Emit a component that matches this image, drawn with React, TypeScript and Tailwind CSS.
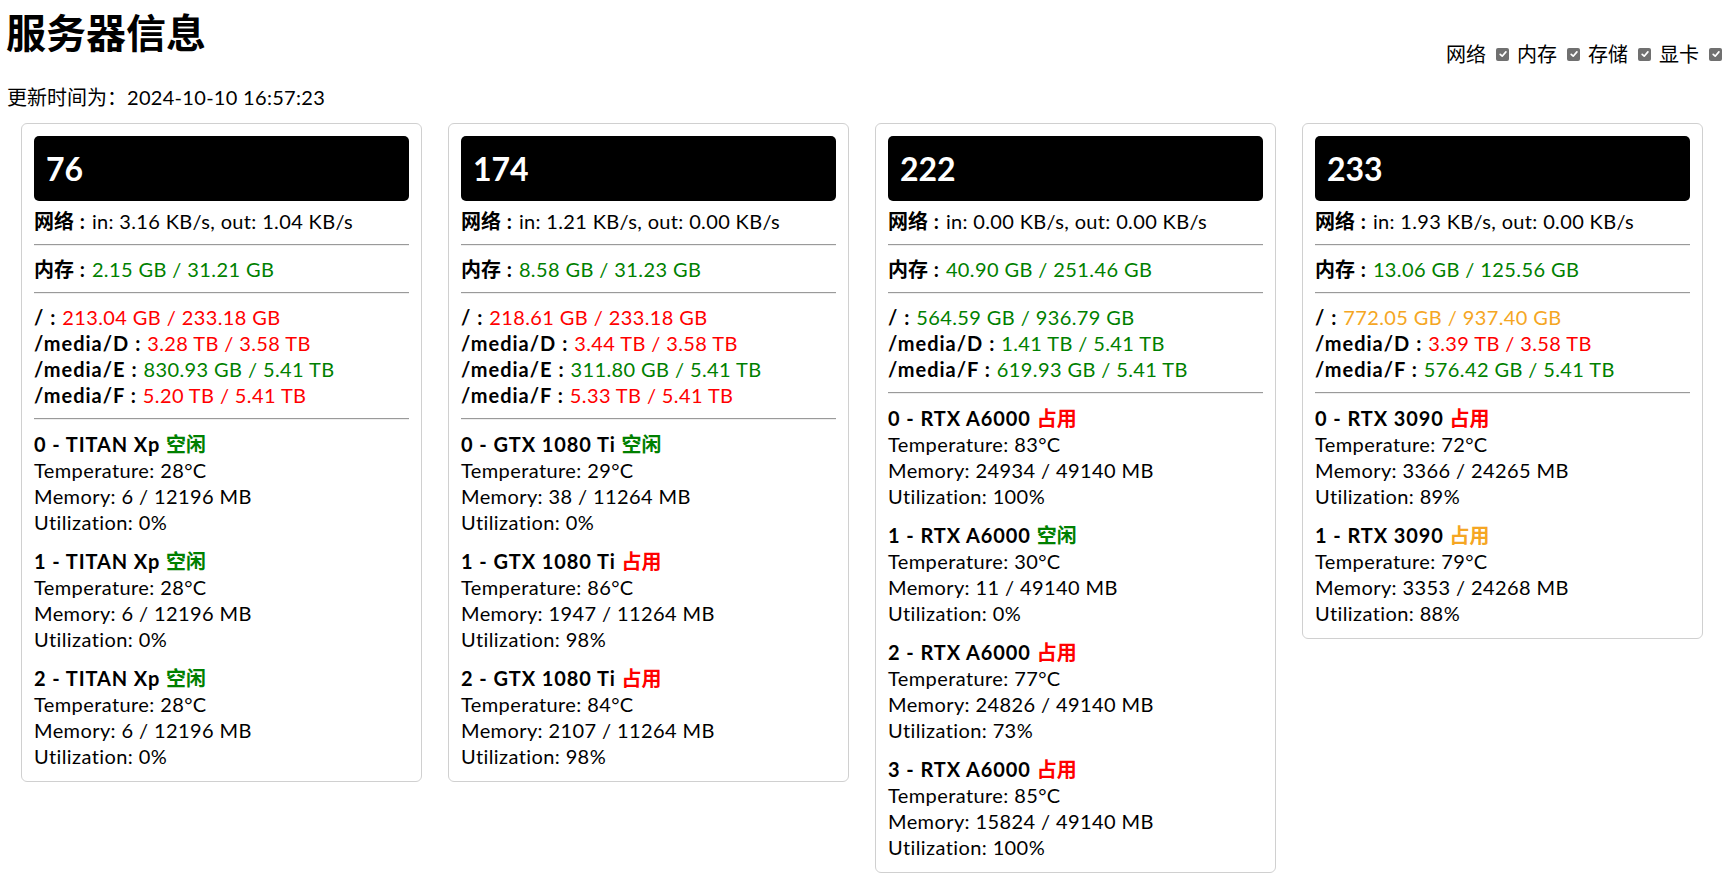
import React from "react";

type Seg = { label: string; value: string; color: string };
type Gpu = { idx: number; name: string; status: string; statusColor: string; temp: number; used: number; total: number; util: number };
type Server = { id: string; net: string; mem: Seg; disks: Seg[]; gpus: Gpu[] };

const GREEN = "text-[#008000]";
const RED = "text-[#ff0000]";
const ORANGE = "text-[#f5a623]";

const servers: Server[] = [
  {
    id: "76",
    net: "in: 3.16 KB/s, out: 1.04 KB/s",
    mem: { label: "内存", value: "2.15 GB / 31.21 GB", color: GREEN },
    disks: [
      { label: "/", value: "213.04 GB / 233.18 GB", color: RED },
      { label: "/media/D", value: "3.28 TB / 3.58 TB", color: RED },
      { label: "/media/E", value: "830.93 GB / 5.41 TB", color: GREEN },
      { label: "/media/F", value: "5.20 TB / 5.41 TB", color: RED },
    ],
    gpus: [
      { idx: 0, name: "TITAN Xp", status: "空闲", statusColor: GREEN, temp: 28, used: 6, total: 12196, util: 0 },
      { idx: 1, name: "TITAN Xp", status: "空闲", statusColor: GREEN, temp: 28, used: 6, total: 12196, util: 0 },
      { idx: 2, name: "TITAN Xp", status: "空闲", statusColor: GREEN, temp: 28, used: 6, total: 12196, util: 0 },
    ],
  },
  {
    id: "174",
    net: "in: 1.21 KB/s, out: 0.00 KB/s",
    mem: { label: "内存", value: "8.58 GB / 31.23 GB", color: GREEN },
    disks: [
      { label: "/", value: "218.61 GB / 233.18 GB", color: RED },
      { label: "/media/D", value: "3.44 TB / 3.58 TB", color: RED },
      { label: "/media/E", value: "311.80 GB / 5.41 TB", color: GREEN },
      { label: "/media/F", value: "5.33 TB / 5.41 TB", color: RED },
    ],
    gpus: [
      { idx: 0, name: "GTX 1080 Ti", status: "空闲", statusColor: GREEN, temp: 29, used: 38, total: 11264, util: 0 },
      { idx: 1, name: "GTX 1080 Ti", status: "占用", statusColor: RED, temp: 86, used: 1947, total: 11264, util: 98 },
      { idx: 2, name: "GTX 1080 Ti", status: "占用", statusColor: RED, temp: 84, used: 2107, total: 11264, util: 98 },
    ],
  },
  {
    id: "222",
    net: "in: 0.00 KB/s, out: 0.00 KB/s",
    mem: { label: "内存", value: "40.90 GB / 251.46 GB", color: GREEN },
    disks: [
      { label: "/", value: "564.59 GB / 936.79 GB", color: GREEN },
      { label: "/media/D", value: "1.41 TB / 5.41 TB", color: GREEN },
      { label: "/media/F", value: "619.93 GB / 5.41 TB", color: GREEN },
    ],
    gpus: [
      { idx: 0, name: "RTX A6000", status: "占用", statusColor: RED, temp: 83, used: 24934, total: 49140, util: 100 },
      { idx: 1, name: "RTX A6000", status: "空闲", statusColor: GREEN, temp: 30, used: 11, total: 49140, util: 0 },
      { idx: 2, name: "RTX A6000", status: "占用", statusColor: RED, temp: 77, used: 24826, total: 49140, util: 73 },
      { idx: 3, name: "RTX A6000", status: "占用", statusColor: RED, temp: 85, used: 15824, total: 49140, util: 100 },
    ],
  },
  {
    id: "233",
    net: "in: 1.93 KB/s, out: 0.00 KB/s",
    mem: { label: "内存", value: "13.06 GB / 125.56 GB", color: GREEN },
    disks: [
      { label: "/", value: "772.05 GB / 937.40 GB", color: ORANGE },
      { label: "/media/D", value: "3.39 TB / 3.58 TB", color: RED },
      { label: "/media/F", value: "576.42 GB / 5.41 TB", color: GREEN },
    ],
    gpus: [
      { idx: 0, name: "RTX 3090", status: "占用", statusColor: RED, temp: 72, used: 3366, total: 24265, util: 89 },
      { idx: 1, name: "RTX 3090", status: "占用", statusColor: ORANGE, temp: 79, used: 3353, total: 24268, util: 88 },
    ],
  },
];

function Hr() {
  return <div className="my-[10px] h-0 border-t border-b border-t-[#9a9a9a] border-b-[#eeeeee]" />;
}

function Check() {
  return (
    <span className="inline-flex h-[13px] w-[13px] items-center justify-center rounded-[2px] bg-[#707070]">
      <svg viewBox="0 0 10 10" className="h-[10px] w-[10px]">
        <path d="M2.2 5.3 L4.2 7.2 L7.9 2.9" stroke="white" strokeWidth="1.7" fill="none" strokeLinecap="round" strokeLinejoin="round" />
      </svg>
    </span>
  );
}

function Label({ text, cjk }: { text: string; cjk?: boolean }) {
  return (
    <span className="font-bold">
      <span className={cjk ? "tracking-normal" : "tracking-[1px]"}>{text}</span>
      <span className="tracking-[1px]"> : </span>
    </span>
  );
}

function Card({ s }: { s: Server }) {
  return (
    <div className="w-[401px] rounded-[6px] border border-[#d0d0d0] p-[12px] text-[20px] leading-[26px] tracking-[0.4px]">
      <div className="flex h-[65px] items-center rounded-[5px] bg-black pl-[12px] text-[32px] font-bold tracking-normal text-white">{s.id}</div>
      <div className="mt-[7px]">
        <Label text="网络" cjk />
        <span className="tracking-[0.35px]">{s.net}</span>
      </div>
      <Hr />
      <div>
        <Label text={s.mem.label} cjk />
        <span className={s.mem.color}>{s.mem.value}</span>
      </div>
      <Hr />
      <div>
        {s.disks.map((d) => (
          <div key={d.label}>
            <Label text={d.label} />
            <span className={d.color}>{d.value}</span>
          </div>
        ))}
      </div>
      <Hr />
      <div className="flex flex-col gap-[13px] pt-[1px]">
        {s.gpus.map((g) => (
          <div key={g.idx}>
            <div className="font-bold tracking-[0.9px]">
              {g.idx} - {g.name} <span className={`${g.statusColor} tracking-normal`}>{g.status}</span>
            </div>
            <div>Temperature: {g.temp}°C</div>
            <div>
              Memory: {g.used} / {g.total} MB
            </div>
            <div>Utilization: {g.util}%</div>
          </div>
        ))}
      </div>
    </div>
  );
}

export default function App() {
  const toggles = ["网络", "内存", "存储", "显卡"];
  return (
    <div className="min-h-screen bg-white text-black" style={{ fontFamily: "Lato, 'Noto Sans CJK SC', sans-serif" }}>
      <div className="flex h-[67px] justify-between">
        <h1 className="ml-[6px] mt-[5px] text-[40px] font-bold leading-[53px]" style={{ fontFamily: "'Noto Sans CJK SC', sans-serif" }}>
          服务器信息
        </h1>
        <div className="mr-[13px] mt-[41px] flex h-[26px] items-center text-[20px]">
          {toggles.map((t, i) => (
            <div key={t} className={`flex items-center ${i < toggles.length - 1 ? "mr-[8px]" : ""}`}>
              <span style={{ fontFamily: "'Noto Sans CJK SC', sans-serif" }}>{t}</span>
              <span className="ml-[10px] flex">
                <Check />
              </span>
            </div>
          ))}
        </div>
      </div>
      <div className="ml-[7px] mt-[17px] text-[20px] leading-[26px]">
        更新时间为：<span className="tracking-[0.3px]">2024-10-10 16:57:23</span>
      </div>
      <div className="mt-[13px] flex flex-wrap items-start gap-[26px] pl-[21px]">
        {servers.map((s) => (
          <Card key={s.id} s={s} />
        ))}
      </div>
    </div>
  );
}
